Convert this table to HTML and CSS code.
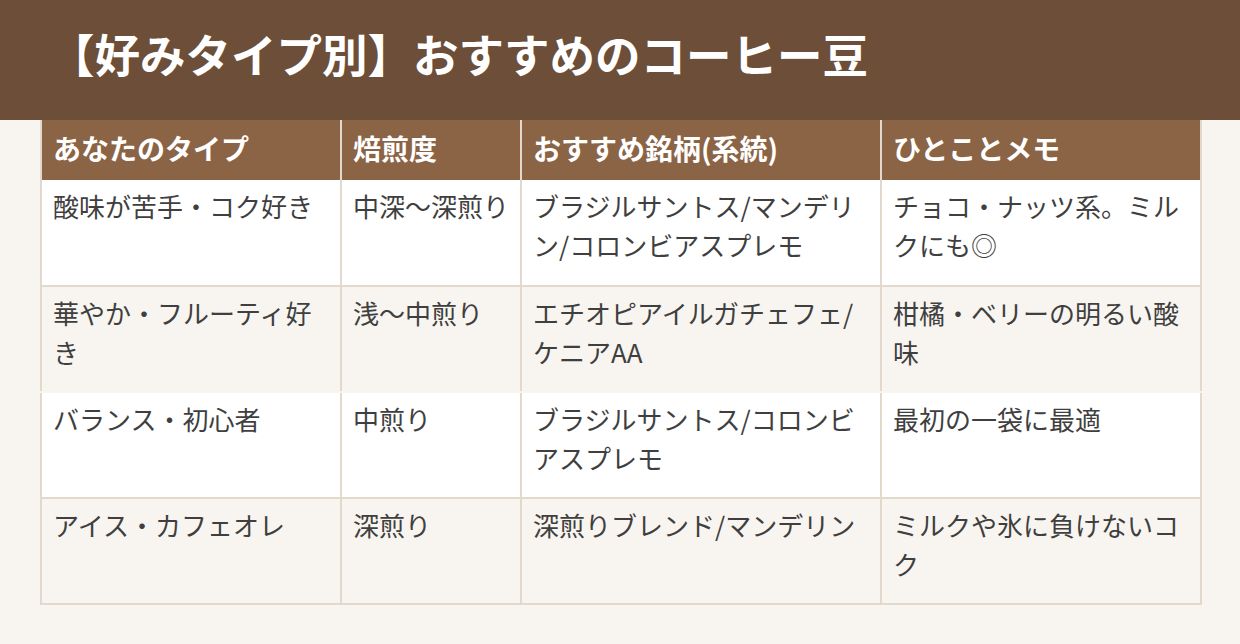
FILE: index.html
```html
<!DOCTYPE html>
<html lang="ja">
<head>
<meta charset="utf-8">
<title>【好みタイプ別】おすすめのコーヒー豆</title>
<link rel="stylesheet" href="styles.css">
</head>
<body>
<header class="page-header">
  <h1 class="page-title">【好みタイプ別】おすすめのコーヒー豆</h1>
</header>
<main class="content">
  <table class="bean-table">
    <colgroup>
      <col class="col-type">
      <col class="col-roast">
      <col class="col-brand">
      <col class="col-memo">
    </colgroup>
    <thead>
      <tr>
        <th>あなたのタイプ</th>
        <th>焙煎度</th>
        <th>おすすめ銘柄(系統)</th>
        <th>ひとことメモ</th>
      </tr>
    </thead>
    <tbody>
      <tr class="row-plain">
        <td>酸味が苦手・コク好き</td>
        <td>中深〜深煎り</td>
        <td>ブラジルサントス/マンデリン/コロンビアスプレモ</td>
        <td>チョコ・ナッツ系。ミルクにも◎</td>
      </tr>
      <tr class="row-stripe row-open">
        <td>華やか・フルーティ好き</td>
        <td>浅〜中煎り</td>
        <td>エチオピアイルガチェフェ/ケニアAA</td>
        <td>柑橘・ベリーの明るい酸味</td>
      </tr>
      <tr class="row-plain">
        <td>バランス・初心者</td>
        <td>中煎り</td>
        <td>ブラジルサントス/コロンビアスプレモ</td>
        <td>最初の一袋に最適</td>
      </tr>
      <tr class="row-stripe">
        <td>アイス・カフェオレ</td>
        <td>深煎り</td>
        <td>深煎りブレンド/マンデリン</td>
        <td>ミルクや氷に負けないコク</td>
      </tr>
    </tbody>
  </table>
</main>
</body>
</html>
```

FILE: styles.css
```css
html, body {
  margin: 0;
  padding: 0;
}

body {
  background: #f8f5f0;
  font-family: "Noto Sans CJK JP", "Noto Sans", sans-serif;
  color: #3f3f3f;
}

.page-header {
  height: 120px;
  box-sizing: border-box;
  background: #6c4e39;
  display: flex;
  align-items: center;
  padding: 0 0 14px 49px;
}

.page-title {
  margin: 0;
  font-size: 45.5px;
  font-weight: 700;
  line-height: 1.2;
  color: #ffffff;
  letter-spacing: 0;
}

.content {
  padding: 0 38px 0 40px;
}

.bean-table {
  border-collapse: collapse;
  table-layout: fixed;
  width: 1162px;
  font-size: 26px;
  line-height: 39px;
}

.col-type { width: 300px; }
.col-roast { width: 180px; }
.col-brand { width: 360px; }
.col-memo { width: 320px; }

.bean-table th,
.bean-table td {
  border-left: 2px solid #e2d9cc;
  border-right: 2px solid #e2d9cc;
  text-align: left;
  padding: 0 10px 0 11px;
}

.bean-table th {
  height: 60px;
  box-sizing: border-box;
  background: #8b6446;
  color: #ffffff;
  font-size: 28px;
  font-weight: 700;
  line-height: 40px;
  vertical-align: middle;
  border-top: 0;
  border-bottom: 0;
  padding-bottom: 4px;
}

.bean-table td {
  height: 106px;
  box-sizing: border-box;
  vertical-align: top;
  padding-top: 6px;
  border-bottom: 2px solid #e2d9cc;
}

.row-plain td {
  background: #ffffff;
}

.row-stripe td {
  background: #f8f5f0;
}

.row-open td {
  border-bottom-color: #f8f5f0;
}
```
